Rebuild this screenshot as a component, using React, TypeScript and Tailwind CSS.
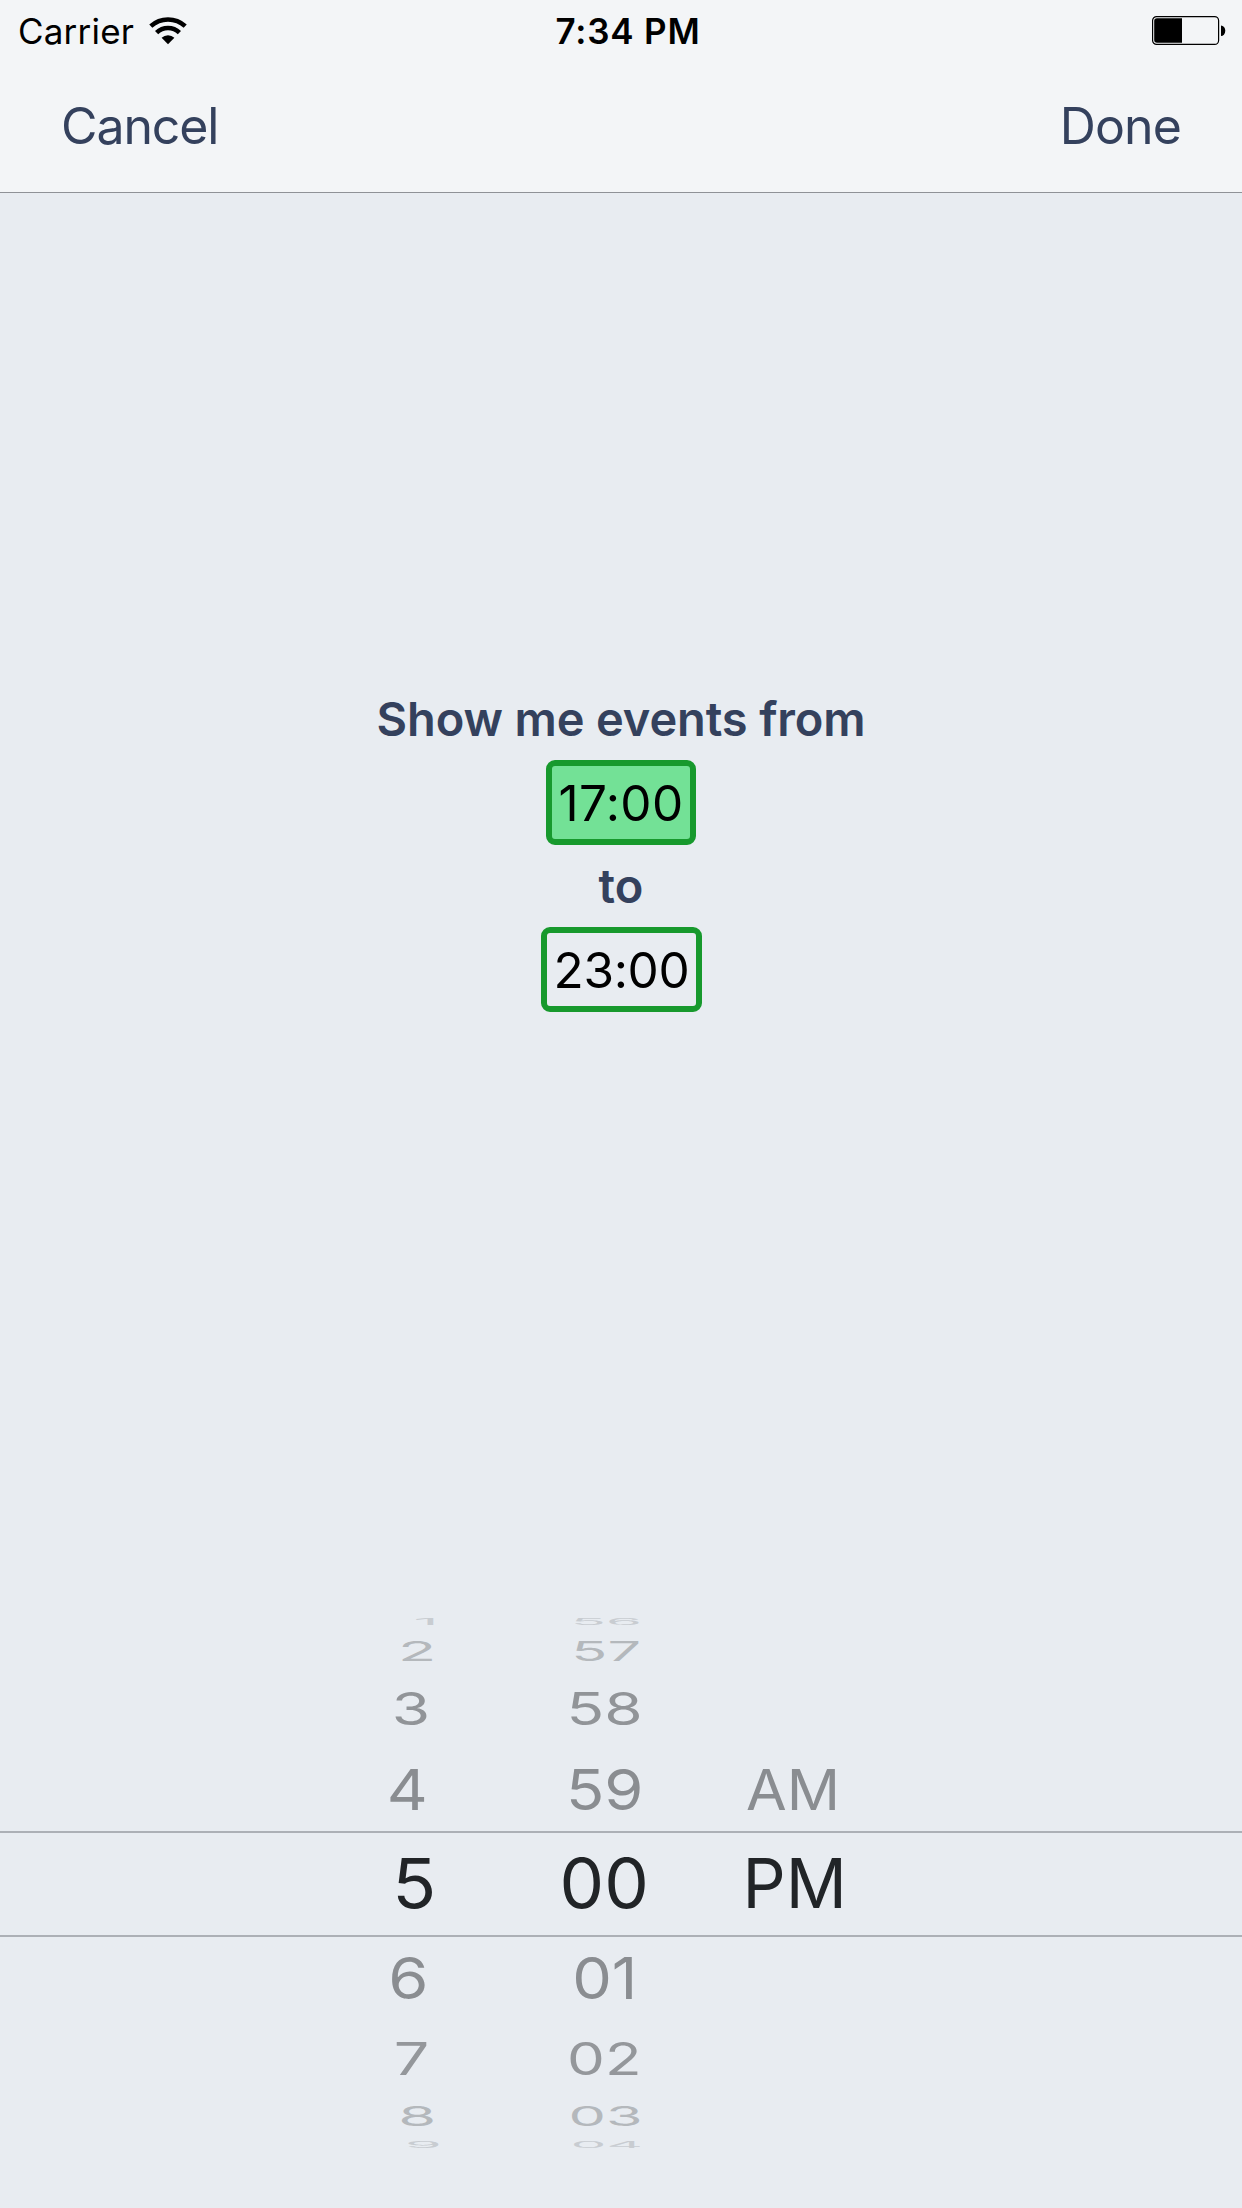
import React from 'react';

type Cell = { text: string; className: string };
type Row = { className: string; hour: Cell; minute: Cell; period?: Cell };

const ROWS_ABOVE: Row[] = [
  {
    className: 'h-[26px] text-[#c8ccd1]',
    hour: { text: '1', className: 'translate-x-[11px] scale-x-[0.9] scale-y-[0.12]' },
    minute: { text: '56', className: 'translate-x-[1px] scale-x-[0.84] scale-y-[0.12]' },
  },
  {
    className: 'h-[32px] text-[#b4b8bc]',
    hour: { text: '2', className: 'translate-x-[2px] scale-x-[0.91] scale-y-[0.4]' },
    minute: { text: '57', className: 'translate-x-[0.7px] scale-x-[0.86] scale-y-[0.4]' },
  },
  {
    className: 'h-[84px] text-[#919498]',
    hour: { text: '3', className: '-translate-x-[4.5px] scale-x-[0.9] scale-y-[0.65]' },
    minute: { text: '58', className: '-translate-x-[0.7px] scale-x-[0.9] scale-y-[0.65]' },
  },
  {
    className: 'h-[77px] text-[#8a8d91]',
    hour: { text: '4', className: '-translate-x-[8px] scale-x-[0.92] scale-y-[0.82]' },
    minute: { text: '59', className: '-translate-x-[0.7px] scale-x-[0.915] scale-y-[0.82]' },
    period: { text: 'AM', className: '-translate-x-[1px] scale-x-[0.855] scale-y-[0.82]' },
  },
];

const SELECTED: Row = {
  className: 'mt-[3px] h-[106px] border-y-2 border-[#acb0b6] text-[#212427]',
  hour: { text: '5', className: '-translate-x-[0.7px] -translate-y-[0.7px] scale-x-[1.05]' },
  minute: { text: '00', className: '-translate-x-[0.4px] -translate-y-[0.7px] scale-x-[1.025]' },
  period: { text: 'PM', className: 'translate-x-[0.5px] -translate-y-[0.7px] scale-x-[0.98]' },
};

const ROWS_BELOW: Row[] = [
  {
    className: 'h-[82px] text-[#8a8d91]',
    hour: { text: '6', className: '-translate-x-[7px] scale-x-[0.94] scale-y-[0.83]' },
    minute: { text: '01', className: 'scale-x-[0.91] scale-y-[0.83]' },
  },
  {
    className: 'h-[80px] text-[#94979b]',
    hour: { text: '7', className: '-translate-x-[3px] scale-x-[0.91] scale-y-[0.645]' },
    minute: { text: '02', className: '-translate-x-[0.5px] scale-x-[0.87] scale-y-[0.645]' },
  },
  {
    className: 'h-[34px] text-[#b4b8bc]',
    hour: { text: '8', className: 'translate-x-[2px] scale-x-[0.89] scale-y-[0.4]' },
    minute: { text: '03', className: 'translate-x-[0.5px] scale-x-[0.86] scale-y-[0.4]' },
  },
  {
    className: 'h-[24px] text-[#c8ccd1]',
    hour: { text: '9', className: 'translate-x-[8px] scale-x-[0.86] scale-y-[0.12]' },
    minute: { text: '04', className: 'translate-x-[1.8px] scale-x-[0.82] scale-y-[0.12]' },
  },
];

function PickerCell({ cell, width }: { cell?: Cell; width: string }) {
  return (
    <div className={`flex justify-center ${width}`}>
      {cell && <span className={`block ${cell.className}`}>{cell.text}</span>}
    </div>
  );
}

function PickerRow({ row }: { row: Row }) {
  return (
    <div className={`flex items-center pl-[365px] text-[69px] leading-none ${row.className}`}>
      <PickerCell cell={row.hour} width="w-[100px]" />
      <PickerCell cell={row.minute} width="ml-[80px] w-[120px]" />
      <PickerCell cell={row.period} width="ml-[69px] w-[120px]" />
    </div>
  );
}

function WifiIcon() {
  return (
    <svg viewBox="0 0 38 28" className="h-7 w-[38px]" fill="none" stroke="#000">
      <path d="M1.8 9.1A25.6 25.6 0 0 1 36.2 9.1" strokeWidth="4.6" />
      <path d="M7.6 15.6A16.4 16.4 0 0 1 30.4 15.6" strokeWidth="4.6" />
      <path d="M12.6 20.8A9.4 9.4 0 0 1 25.4 20.8L19 27.2Z" fill="#000" stroke="none" />
    </svg>
  );
}

function BatteryIcon() {
  return (
    <svg viewBox="0 0 74 29" className="h-[29px] w-[74px]">
      <rect x="0.6" y="0.6" width="66" height="27.8" rx="4" fill="none" stroke="#000" strokeWidth="1.2" />
      <path d="M30 2.2H5a2.8 2.8 0 0 0-2.8 2.8v19a2.8 2.8 0 0 0 2.8 2.8h25z" fill="#000" />
      <path d="M69 9.5a4.3 5.2 0 0 1 0 10.4z" fill="#000" />
    </svg>
  );
}

function Header() {
  return (
    <header className="h-[193px] border-b border-[#8f9297] bg-[#f3f5f7]">
      <div className="grid h-[62px] grid-cols-3 items-center text-[35px] leading-none text-black">
        <div className="flex items-center gap-[15px] pl-[18px]">
          <span className="tracking-[0.2px]">Carrier</span>
          <WifiIcon />
        </div>
        <div className="pl-[14px] text-center font-semibold tracking-[0.8px]">7:34 PM</div>
        <div className="flex justify-end pr-4 pb-px">
          <BatteryIcon />
        </div>
      </div>
      <nav className="flex h-[128px] items-center justify-between pr-[61px] pl-[61px] text-[50px] leading-none text-[#34415d]">
        <button className="tracking-[-1.1px]">Cancel</button>
        <button className="tracking-[-0.9px]">Done</button>
      </nav>
    </header>
  );
}

export default function App() {
  return (
    <div className="flex h-[2208px] w-[1242px] flex-col overflow-hidden bg-[#e8ecf1] font-['Inter',sans-serif]">
      <Header />
      <main className="mt-[496px] flex flex-col items-center gap-[11px]">
        <h1 className="h-[60px] text-[47px] leading-[60px] font-semibold tracking-[-0.13px] text-[#34415d]">
          Show me events from
        </h1>
        <div className="flex h-[85px] w-[150px] items-center justify-center rounded-[9px] border-6 border-[#17992d] bg-[#73e196] pt-[2px] text-[49.5px] leading-none tracking-[0.4px] text-black">
          17:00
        </div>
        <p className="h-[60px] text-[47px] leading-[60px] font-semibold text-[#34415d]">to</p>
        <div className="ml-px flex h-[85px] w-[161px] items-center justify-center rounded-[9px] border-6 border-[#17992d] pt-[2px] text-[49.5px] leading-none tracking-[-0.3px] text-black">
          23:00
        </div>
      </main>
      <section className="mt-[597px]">
        {ROWS_ABOVE.map((row) => (
          <PickerRow key={row.hour.text} row={row} />
        ))}
        <PickerRow row={SELECTED} />
        {ROWS_BELOW.map((row) => (
          <PickerRow key={row.hour.text} row={row} />
        ))}
      </section>
    </div>
  );
}
